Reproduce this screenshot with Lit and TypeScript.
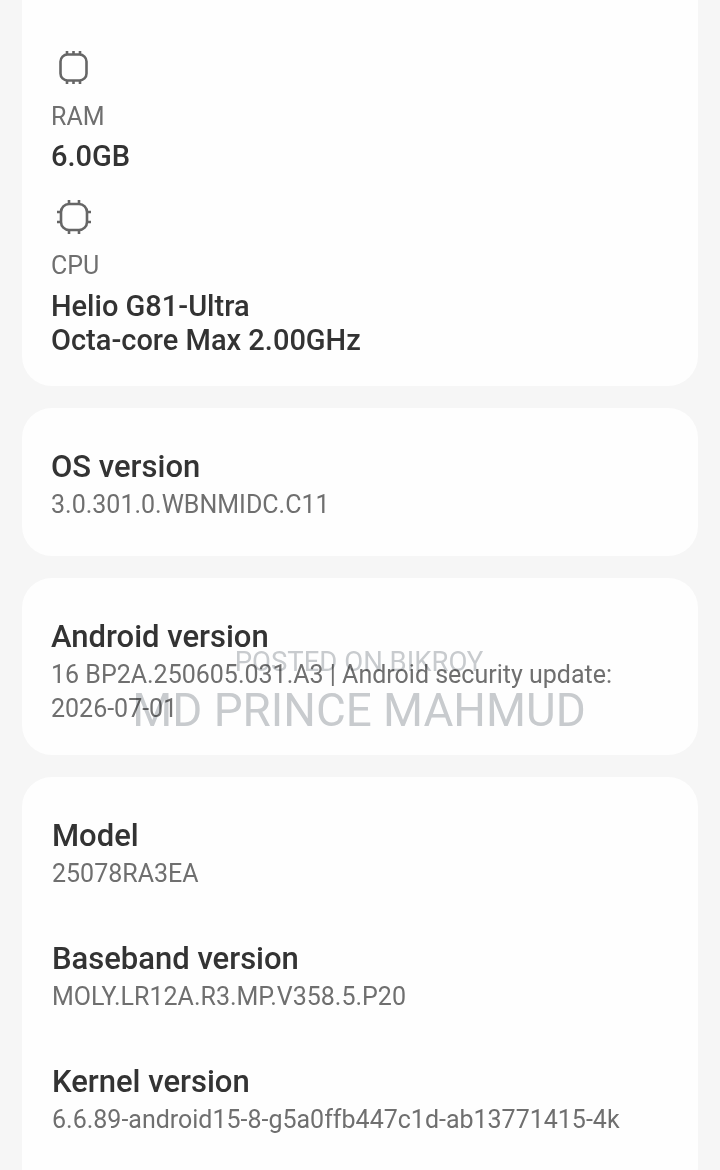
import { LitElement, html, css } from 'lit';
import { customElement } from 'lit/decorators.js';

const ramIcon = html`<svg class="icon ram" width="32" height="36" viewBox="0 0 32 36" fill="none" stroke="#666" stroke-width="2.6">
  <rect x="3.5" y="4.5" width="26" height="26" rx="7"></rect>
  <path d="M10 1v3.5M16.5 1v3.5M23 1v3.5M10 30.5V34M16.5 30.5V34M23 30.5V34"></path>
</svg>`;

const cpuIcon = html`<svg class="icon" width="36" height="36" viewBox="0 0 36 36" fill="none" stroke="#666" stroke-width="2.6">
  <rect x="5" y="5" width="26" height="26" rx="8"></rect>
  <path d="M13 1v4M23 1v4M13 31v4M23 31v4M1 13h4M1 23h4M31 13h4M31 23h4"></path>
</svg>`;

@customElement('app-root')
export class AppRoot extends LitElement {
    static styles = css`
        :host {
            display: block;
            position: relative;
            height: 1170px;
            overflow: hidden;
            background: #f6f6f6;
            font-family: Roboto, "Liberation Sans", sans-serif;
        }

        .list {
            display: flex;
            flex-direction: column;
            gap: 22px;
            padding: 0 22px;
        }

        .card {
            background: #fefefe;
            border-radius: 30px;
            padding: 0 29px;
        }

        .specs {
            margin-top: -30px;
            height: 416px;
            box-sizing: border-box;
            padding-top: 80px;
        }

        .spec-block { display: flex; flex-direction: column; }
        .spec-block + .spec-block { margin-top: 26px; }
        .spec-block + .spec-block .spec-value { margin-top: 8px; }

        .icon { display: block; margin-left: 5px; }
        .icon.ram { margin-left: 6px; }

        .spec-label {
            margin-top: 16px;
            font-size: 25px;
            line-height: 30px;
            color: #6f6f6f;
        }

        .spec-value {
            margin-top: 7px;
            font-size: 29px;
            line-height: 34px;
            font-weight: 500;
            color: #333;
        }

        .short { height: 148px; box-sizing: border-box; padding-top: 41px; }
        .tall { height: 177px; box-sizing: border-box; padding-top: 41px; }
        .rows { height: 420px; box-sizing: border-box; padding: 41px 29px 0 30px; }

        .row + .row { margin-top: 50px; }

        .title {
            font-size: 31px;
            line-height: 36px;
            font-weight: 500;
            color: #333;
        }

        .sub {
            margin-top: 3px;
            font-size: 25px;
            line-height: 34px;
            color: #6f6f6f;
        }

        /* multiply keeps the card text readable through the watermark */
        .watermark {
            position: absolute;
            left: 0;
            width: 718px;
            text-align: center;
            color: #c9cccf;
            white-space: nowrap;
            pointer-events: none;
            mix-blend-mode: multiply;
        }

        .wm-small { top: 647px; font-size: 27.5px; line-height: 30px; }
        .wm-large { top: 684px; font-size: 45.8px; line-height: 54px; }
    `;

    render() {
        return html`
            <div class="list">
                <section class="card specs">
                    <div class="spec-block">
                        ${ramIcon}
                        <div class="spec-label">RAM</div>
                        <div class="spec-value">6.0GB</div>
                    </div>
                    <div class="spec-block">
                        ${cpuIcon}
                        <div class="spec-label">CPU</div>
                        <div class="spec-value">Helio G81-Ultra<br />Octa-core Max 2.00GHz</div>
                    </div>
                </section>
                <section class="card short">
                    <div class="title">OS version</div>
                    <div class="sub">3.0.301.0.WBNMIDC.C11</div>
                </section>
                <section class="card tall">
                    <div class="title">Android version</div>
                    <div class="sub">16 BP2A.250605.031.A3 | Android security update:<br />2026-07-01</div>
                </section>
                <section class="card rows">
                    <div class="row">
                        <div class="title">Model</div>
                        <div class="sub">25078RA3EA</div>
                    </div>
                    <div class="row">
                        <div class="title">Baseband version</div>
                        <div class="sub">MOLY.LR12A.R3.MP.V358.5.P20</div>
                    </div>
                    <div class="row">
                        <div class="title">Kernel version</div>
                        <div class="sub">6.6.89-android15-8-g5a0ffb447c1d-ab13771415-4k</div>
                    </div>
                </section>
            </div>
            <div class="watermark wm-small">POSTED ON BIKROY</div>
            <div class="watermark wm-large">MD PRINCE MAHMUD</div>
        `;
    }
}
